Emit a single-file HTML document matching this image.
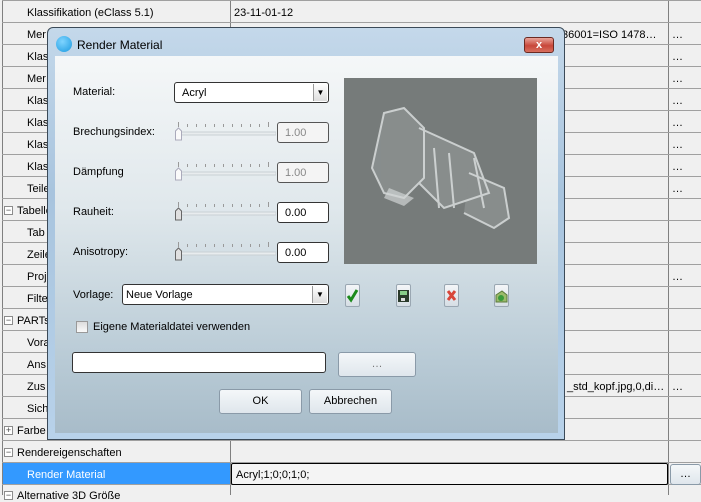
<!DOCTYPE html>
<html><head><meta charset="utf-8"><style>
*{margin:0;padding:0;box-sizing:border-box}
body{width:701px;height:495px;overflow:hidden;background:#f0f0f0;font-family:"Liberation Sans","DejaVu Sans",sans-serif;font-size:11px;color:#000;position:relative}
.a{position:absolute}
.hl{position:absolute;left:2px;width:699px;height:1px;background:#a0a0a0}
.t{position:absolute;white-space:nowrap;font-size:11px}
.dots{position:absolute;left:672px;font-size:11px;letter-spacing:1px}
.pm{position:absolute;left:4px;width:9px;height:9px;border:1px solid #8c8c8c;background:#fff;font-size:9px;line-height:7px;text-align:center;color:#444}
.tb{position:absolute;background:#fff;border:1px solid #333;border-radius:3px;font-size:11px;padding:4px 0 0 7px}
.dis{background:#f4f4f4;color:#888;border-color:#555}
.btn{position:absolute;border:1px solid #8a9aa8;border-radius:3px;background:linear-gradient(#f4f7f9,#dfe6ec);text-align:center;font-size:11px}
.ic{position:absolute;width:15px;height:23px;border:1px solid #9aa7b2;border-radius:2px;background:linear-gradient(#f4f6f8,#d6dee5)}
.gw{position:absolute;left:0;top:2px;width:701px;height:495px}
</style></head><body>
<div class="a" style="left:2px;top:0;width:1px;height:495px;background:#808080"></div>
<div class="a" style="left:230px;top:0;width:1px;height:495px;background:#808080"></div>
<div class="a" style="left:668px;top:0;width:1px;height:495px;background:#808080"></div>
<div class="hl" style="top:0"></div><div class="hl" style="top:22px"></div><div class="hl" style="top:44px"></div><div class="hl" style="top:66px"></div><div class="hl" style="top:88px"></div><div class="hl" style="top:110px"></div><div class="hl" style="top:132px"></div><div class="hl" style="top:154px"></div><div class="hl" style="top:176px"></div><div class="hl" style="top:198px"></div><div class="hl" style="top:220px"></div><div class="hl" style="top:242px"></div><div class="hl" style="top:264px"></div><div class="hl" style="top:286px"></div><div class="hl" style="top:308px"></div><div class="hl" style="top:330px"></div><div class="hl" style="top:352px"></div><div class="hl" style="top:374px"></div><div class="hl" style="top:396px"></div><div class="hl" style="top:418px"></div><div class="hl" style="top:440px"></div><div class="hl" style="top:462px"></div><div class="hl" style="top:484px"></div>
<div class="a" style="left:3px;top:463px;width:227px;height:21px;background:#3399ff"></div>
<div class="a" style="left:231px;top:463px;width:437px;height:22px;background:#f4f4f4;border:1px solid #000;border-radius:2px"></div>
<div class="btn" style="left:670px;top:464px;width:31px;height:21px;line-height:18px">…</div>
<div class="gw">
<div class="t" style="left:27px;top:5px">Klassifikation (eClass 5.1)</div>
<div class="t" style="left:234px;top:5px">23-11-01-12</div>
<div class="t" style="left:562px;top:27px">36001=ISO 1478…</div>
<div class="t" style="left:27px;top:27px">Mer</div><div class="t" style="left:27px;top:49px">Klas</div><div class="t" style="left:27px;top:71px">Mer</div><div class="t" style="left:27px;top:93px">Klas</div><div class="t" style="left:27px;top:115px">Klas</div><div class="t" style="left:27px;top:137px">Klas</div><div class="t" style="left:27px;top:159px">Klas</div><div class="t" style="left:27px;top:181px">Teile</div>
<div class="pm" style="top:204px">−</div><div class="t" style="left:17px;top:203px">Tabelle</div>
<div class="t" style="left:27px;top:225px">Tab</div><div class="t" style="left:27px;top:247px">Zeile</div><div class="t" style="left:27px;top:269px">Proj</div><div class="t" style="left:27px;top:291px">Filte</div>
<div class="pm" style="top:314px">−</div><div class="t" style="left:17px;top:313px">PARTs</div>
<div class="t" style="left:27px;top:335px">Vora</div><div class="t" style="left:27px;top:357px">Ans</div><div class="t" style="left:27px;top:379px">Zus</div><div class="t" style="left:27px;top:401px">Sich</div>
<div class="pm" style="top:424px">+</div><div class="t" style="left:17px;top:423px">Farbe</div>
<div class="pm" style="top:446px">−</div><div class="t" style="left:17px;top:445px">Rendereigenschaften</div>
<div class="t" style="left:27px;top:467px;color:#fff">Render Material</div>
<div class="t" style="left:236px;top:467px">Acryl;1;0;0;1;0;</div>
<div class="pm" style="top:489px">−</div><div class="t" style="left:17px;top:488px">Alternative 3D Größe</div>
<div class="t" style="left:567px;top:379px">_std_kopf.jpg,0,di…</div>
<div class="dots" style="top:27px">…</div><div class="dots" style="top:49px">…</div><div class="dots" style="top:71px">…</div><div class="dots" style="top:93px">…</div><div class="dots" style="top:115px">…</div><div class="dots" style="top:137px">…</div><div class="dots" style="top:159px">…</div><div class="dots" style="top:181px">…</div><div class="dots" style="top:269px">…</div><div class="dots" style="top:379px">…</div>
</div>

<div class="a" style="left:47px;top:27px;width:518px;height:413px;border:1px solid #3b4a58;border-radius:6px 6px 0 0;background:linear-gradient(#c4d8ea,#a8c4de 40%,#b8d2ea);"></div>
<div class="a" style="left:56px;top:36px;width:16px;height:16px;border-radius:50%;background:radial-gradient(circle at 40% 35%,#7fd4ff,#1a9ae0)"></div>
<div class="t" style="left:77px;top:38px;font-size:12px">Render Material</div>
<div class="a" style="left:524px;top:37px;width:30px;height:16px;border:1px solid #6b2a22;border-radius:3px;background:linear-gradient(#e9a49a,#c8473a 55%,#d8705f);color:#fff;font-weight:bold;text-align:center;font-size:11px;line-height:14px">x</div>
<div class="a" style="left:55px;top:56px;width:503px;height:377px;background:linear-gradient(#f5f7f8,#e0e8ec 40%,#b9cbd6 80%,#a8bcc9);"></div>

<div class="t" style="left:73px;top:86px">Material:</div>
<div class="tb" style="left:174px;top:82px;width:155px;height:21px">Acryl</div>
<div class="a" style="left:313px;top:84px;width:14px;height:17px;background:linear-gradient(#fff,#ddd);border-left:1px solid #999;font-size:8px;text-align:center;line-height:17px">▼</div>

<div class="t" style="left:73px;top:126px">Brechungsindex:</div>
<div class="t" style="left:73px;top:166px">Dämpfung</div>
<div class="t" style="left:73px;top:206px">Rauheit:</div>
<div class="t" style="left:73px;top:246px">Anisotropy:</div>

<svg class="a" style="left:174px;top:120px" width="102" height="150">
<g stroke="#999" stroke-width="1">
<path d="M4.5 2v5M13.5 4v3M22.5 4v3M31.5 4v3M40.5 4v3M49.5 4v3M58.5 4v3M67.5 4v3M76.5 4v3M85.5 4v3M94.5 2v5"/>
<path d="M4.5 42v5M13.5 44v3M22.5 44v3M31.5 44v3M40.5 44v3M49.5 44v3M58.5 44v3M67.5 44v3M76.5 44v3M85.5 44v3M94.5 42v5"/>
<path d="M4.5 82v5M13.5 84v3M22.5 84v3M31.5 84v3M40.5 84v3M49.5 84v3M58.5 84v3M67.5 84v3M76.5 84v3M85.5 84v3M94.5 82v5"/>
<path d="M4.5 122v5M13.5 124v3M22.5 124v3M31.5 124v3M40.5 124v3M49.5 124v3M58.5 124v3M67.5 124v3M76.5 124v3M85.5 124v3M94.5 122v5"/>
</g>
<g fill="#e8ecee" stroke="#c9d0d4"><rect x="2" y="12" width="100" height="3"/><rect x="2" y="52" width="100" height="3"/><rect x="2" y="92" width="100" height="3"/><rect x="2" y="132" width="100" height="3"/></g>
<g stroke="#aab" fill="#fafafa"><path d="M1.5 11l3-3 3 3v9h-6z"/><path d="M1.5 51l3-3 3 3v9h-6z"/></g>
<g stroke="#666" fill="#e0e0e0"><path d="M1.5 91l3-3 3 3v9h-6z"/><path d="M1.5 131l3-3 3 3v9h-6z"/></g>
</svg>
<div class="tb dis" style="left:277px;top:122px;width:52px;height:21px">1.00</div>
<div class="tb dis" style="left:277px;top:162px;width:52px;height:21px">1.00</div>
<div class="tb" style="left:277px;top:202px;width:52px;height:21px">0.00</div>
<div class="tb" style="left:277px;top:242px;width:52px;height:21px">0.00</div>

<svg class="a" style="left:344px;top:78px" width="193" height="186">
<rect width="193" height="186" fill="#767b7a"/>
<g fill="#8a8f8f" opacity=".9"><path d="M40 35 L60 30 L80 50 L80 100 L60 120 L40 115 L28 90 Z"/><path d="M75 50 L130 75 L145 115 L100 130 L75 105Z"/><path d="M125 95 L160 110 L165 140 L150 150 L120 135Z"/></g>
<g fill="none" stroke="#d8dcdc" stroke-width="2" opacity=".85">
<path d="M40 35 L60 30 L80 50 L80 100 L60 120 L40 115 L28 90 Z"/>
<path d="M75 50 L130 75 L145 115 L100 130 L75 105"/>
<path d="M125 95 L160 110 L165 140 L150 150 L120 135"/>
<path d="M90 70 L95 130 M105 75 L110 130 M130 80 L140 130"/>
</g>
<path d="M45 110 L70 120 L60 128 L40 120Z" fill="#d0d4d4" opacity=".7"/>
</svg>

<div class="t" style="left:73px;top:289px">Vorlage:</div>
<div class="tb" style="left:122px;top:284px;width:207px;height:21px;padding-left:3px">Neue Vorlage</div>
<div class="a" style="left:312px;top:286px;width:15px;height:17px;background:linear-gradient(#fff,#ddd);border-left:1px solid #999;font-size:8px;text-align:center;line-height:17px">▼</div>

<div class="ic" style="left:345px;top:284px"><svg width="13" height="21"><path d="M2 11l3 4 6-10" stroke="#1c8a1c" stroke-width="3" fill="none"/></svg></div>
<div class="ic" style="left:396px;top:284px"><svg width="13" height="21"><rect x="1" y="5" width="11" height="12" fill="#2a3a2a"/><rect x="3" y="6" width="7" height="4" fill="#8c8"/><rect x="4" y="13" width="4" height="3" fill="#ddd"/></svg></div>
<div class="ic" style="left:444px;top:284px"><svg width="13" height="21"><path d="M3 6l7 9M10 6l-7 9" stroke="#d8463a" stroke-width="3"/></svg></div>
<div class="ic" style="left:494px;top:284px"><svg width="13" height="21"><path d="M1 10l6-4 5 4v7H1z" fill="#9bbb6a" stroke="#5a7a3a"/><circle cx="6" cy="13" r="3" fill="#3a9a3a"/></svg></div>

<div class="a" style="left:76px;top:321px;width:12px;height:12px;border:1px solid #999;background:linear-gradient(#ddd,#fafafa)"></div>
<div class="t" style="left:93px;top:321px">Eigene Materialdatei verwenden</div>

<div class="tb" style="left:72px;top:352px;width:254px;height:21px"></div>
<div class="btn" style="left:338px;top:352px;width:78px;height:25px;line-height:22px;color:#777">…</div>
<div class="btn" style="left:219px;top:389px;width:83px;height:25px;line-height:23px">OK</div>
<div class="btn" style="left:309px;top:389px;width:83px;height:25px;line-height:23px">Abbrechen</div>
</body></html>
